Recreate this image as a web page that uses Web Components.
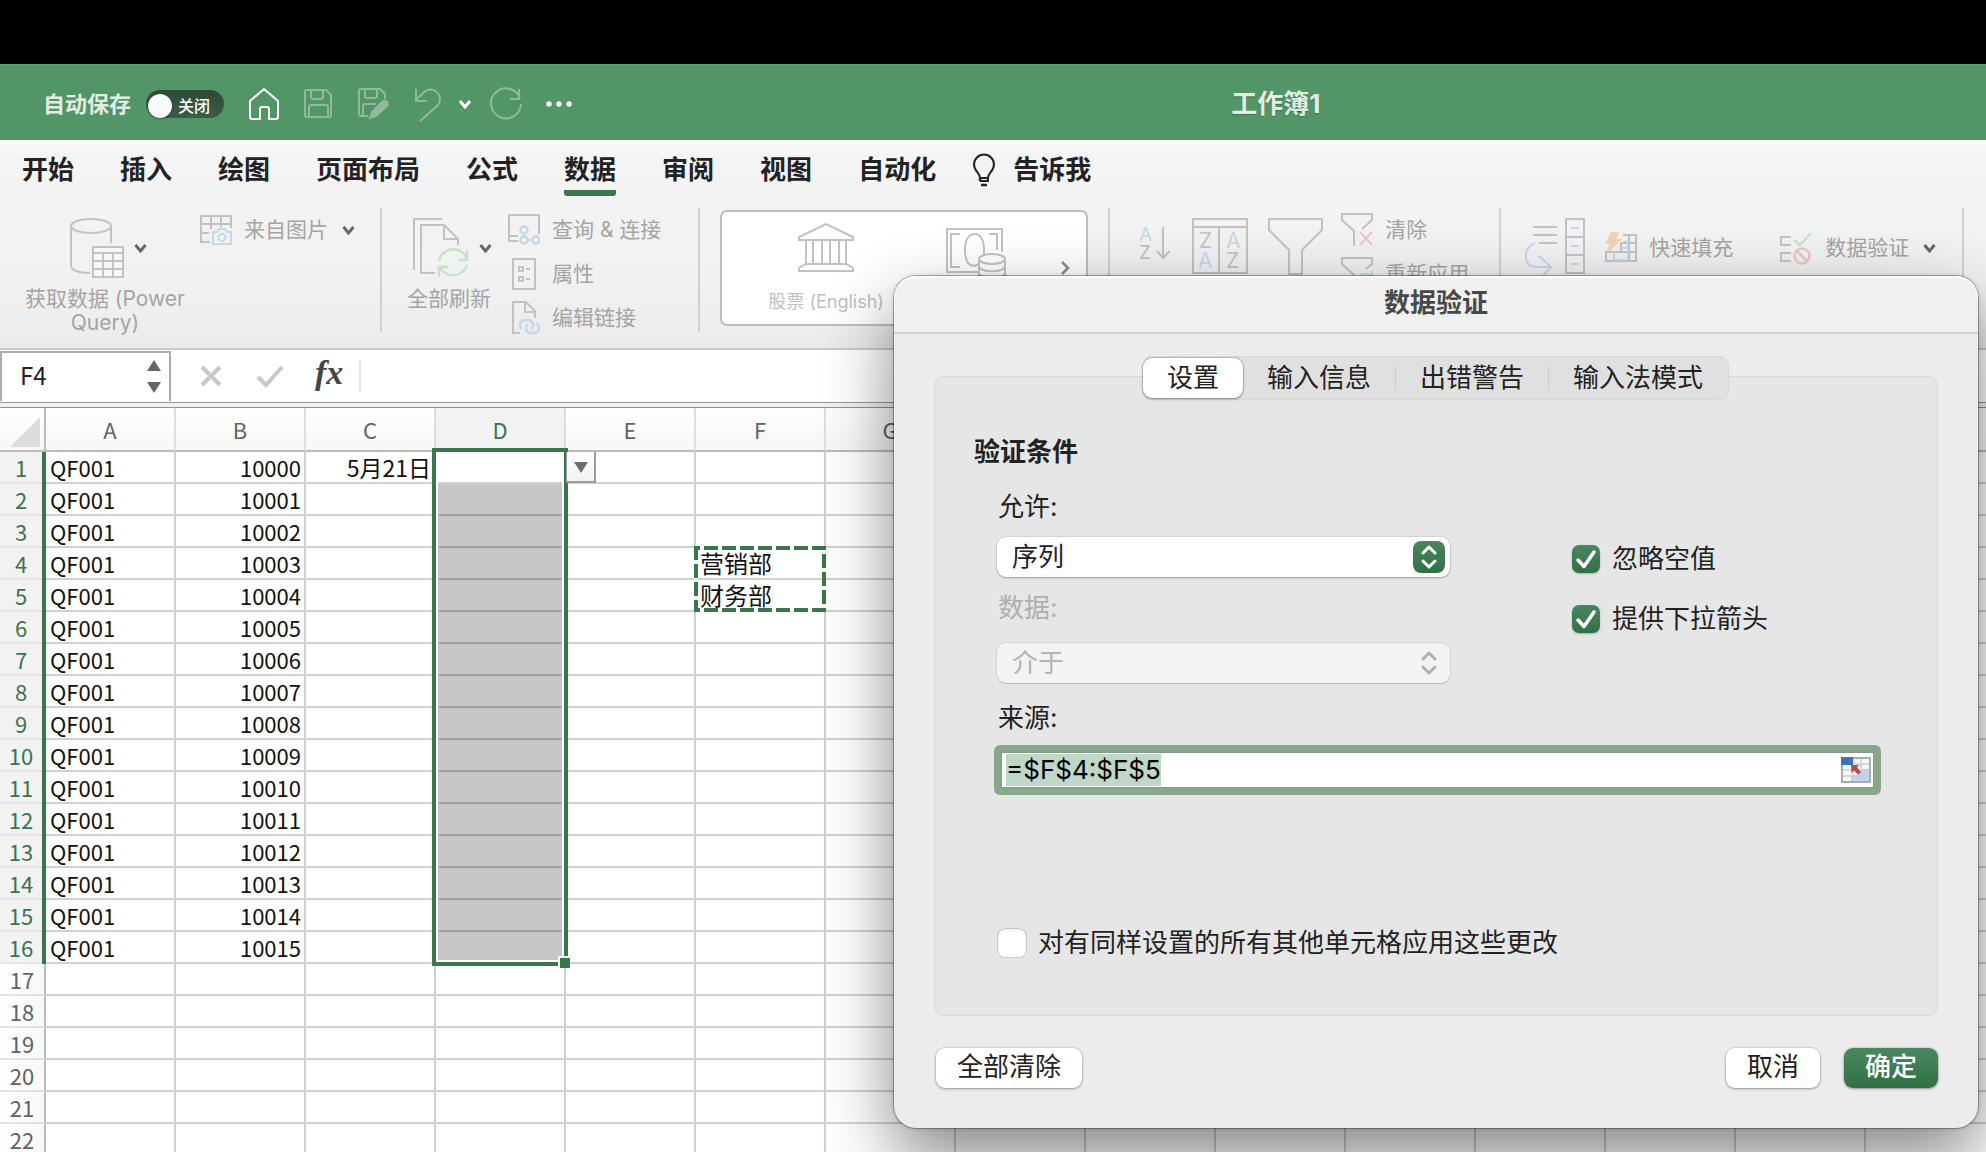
<!DOCTYPE html>
<html lang="zh-CN">
<head>
<meta charset="utf-8">
<title>工作簿1</title>
<style>
html, body { margin: 0; height: 100%; overflow: hidden; background: #fff; }
body { font-family: Inter, "Noto Sans CJK SC", sans-serif; color: #222; }
</style>
</head>
<body>
<excel-window></excel-window>
<script>
const G = '#c2c2c2', B = '#c3d8eb', GR = '#c6e2c9', R = '#efc5c3', O = '#f2d3b3';
const ICONS = {
  home: [32, 34, `<path d="M2 14 L16 2 L30 14 V30 a2 2 0 0 1-2 2 H21 V22 a2 2 0 0 0-2-2 H14 a2 2 0 0 0-2 2 V32 H4 a2 2 0 0 1-2-2 Z" stroke="#fff"/>`],
  save: [30, 30, `<g stroke="#8fbb9c"><path d="M4 1 H23 L28 6 V26 a2 2 0 0 1-2 2 H4 a2 2 0 0 1-2-2 V3 a2 2 0 0 1 2-2Z"/><path d="M8 1 V8 a2 2 0 0 0 2 2 H18 a2 2 0 0 0 2-2 V1 M6 28 V18 a2 2 0 0 1 2-2 H23 a2 2 0 0 1 2 2 V28"/></g>`],
  saveas: [32, 32, `<g stroke="#8fbb9c"><path d="M11 28 H4 a2 2 0 0 1-2-2 V3 a2 2 0 0 1 2-2 H23 L28 6 V11 M8 1 V8 a2 2 0 0 0 2 2 H18 a2 2 0 0 0 2-2 V1 M6 28 V18 a2 2 0 0 1 2-2 H19"/><path d="M13 30 L15 24 L25 14 a2.5 2.5 0 0 1 5 4 L19 28 Z" fill="#8fbb9c"/></g>`],
  undo: [30, 36, `<path d="M3 3 V15 H14 M3 14 L11 6 A9.6 9.6 0 0 1 25 19 L7 35" stroke="#8fbb9c"/>`],
  redo: [36, 36, `<path d="M32 12 A15 15 0 1 0 33 18 M31 3 V13 H22" stroke="#8fbb9c"/>`],
  chevwhite: [14, 10, `<path d="M2 2 L7 8 L12 2" stroke="#fff" stroke-width="3"/>`],
  chev: [13, 10, `<path d="M1.500 2 L6.500 8 L11.500 2" stroke="#666" stroke-width="3"/>`],
  chevright: [10, 16, `<path d="M2 2 L8 8 L2 14" stroke="#8a8a8a" stroke-width="2.500"/>`],
  dots: [28, 8, `<g fill="#fff" stroke="none"><circle cx="4" cy="4" r="2.700"/><circle cx="14" cy="4" r="2.700"/><circle cx="24" cy="4" r="2.700"/></g>`],
  bulb: [24, 34, `<g stroke="#222"><path d="M8 25 C8 20 2 18 2 11.500 A10 10 0 0 1 22 11.500 C22 18 16 20 16 25 Z M8 28 H16 V25" /><path d="M8 25 V28 M9 32 H15" stroke-width="2.500"/></g>`],
  getdata: [54, 60, `<g stroke="${G}"><ellipse cx="21" cy="8" rx="20" ry="7"/><path d="M1 8 V48 C1 52 9 55 20 55 M41 8 V25"/><rect x="23" y="29" width="30" height="30" fill="#f8f8f8"/><path d="M23 35 H53 M23 43 H53 M23 51 H53 M33 35 V59 M43 35 V59"/></g>`],
  frompic: [32, 30, `<g stroke="${G}"><path d="M10 27 H1 V1 H31 V13 M1 9 H31 M11 1 V14 M21 1 V12 M1 18 H9"/></g><g stroke="${B}"><path d="M13 17 H17 L19 14 H25 L27 17 H31 V29 H13 Z"/><circle cx="22" cy="22.500" r="3.500"/></g>`],
  refreshall: [56, 60, `<g stroke="${G}"><path d="M29 1 H1 V52 M22 55 H8 V7 H31 L45 21 V27 M31 7 V21 H45"/></g><g stroke="${GR}" stroke-width="2.500"><path d="M26 43 A14.500 14.500 0 0 1 54 41 M54 32 V42 H45 M54 47 A14.500 14.500 0 0 1 27 49 M26 59 V49 H35"/></g>`],
  query: [32, 32, `<path d="M10 27 H1 V1 H31 V20 M1 22 H10" stroke="${G}"/><g stroke="${B}" stroke-width="2.500"><circle cx="16" cy="16" r="3.500"/><circle cx="16" cy="26" r="3.500"/><circle cx="28" cy="26" r="3.500"/><path d="M16 19 V22 M20 26 H24"/></g>`],
  props: [32, 32, `<g stroke="${G}"><rect x="5" y="1" width="22" height="30"/><rect x="11" y="9" width="4" height="4"/><rect x="11" y="19" width="4" height="4"/><path d="M18 11 H22 M18 21 H22"/></g>`],
  links: [32, 34, `<path d="M12 32 H5 V1 H18 L27 10 V17 M17 1 V11 H27" stroke="${G}"/><path d="M14 28 a5 5 0 0 1 2-9 H21 a5 5 0 0 1 2 9 M20 23 a5 5 0 0 0 2 9 H27 a5 5 0 0 0 1-9.500" stroke="${B}" stroke-width="2.500"/>`],
  bank: [56, 50, `<g stroke="${G}"><path d="M1 15 L28 2 L55 15 V18 H1 Z M8 18 V42 M15 18 V42 M24 18 V42 M32 18 V42 M41 18 V42 M48 18 V42 M8 42 H48 L55 46 V49 H1 V46 Z"/></g>`],
  money: [62, 56, `<g stroke="${G}"><path d="M32 44 H1 V1 H56 V24 M14 6 H5 V39 H14 M43 6 H51 V22"/><path d="M33 36 C22 42 19 31 19 22 C19 13 22 6 29 6 C35 6 38 13 38 22 V26"/><ellipse cx="46" cy="31" rx="13" ry="5" fill="#fff"/><path d="M33 31 V52 C33 59 59 59 59 52 V31 M33 38 C33 45 59 45 59 38 M33 45 C33 52 59 52 59 45"/></g>`],
  sort: [34, 34, `<text x="1" y="15" font-size="19" fill="${B}">A</text><text x="1" y="33" font-size="19" fill="#bdbdbd">Z</text><path d="M25 1 V31 M19 25 L25 32 L32 25" stroke="${G}"/>`],
  customsort: [56, 56, `<g stroke="${G}"><rect x="1" y="1" width="54" height="54"/><path d="M1 9 H55 M27 9 V55"/></g><text x="7" y="30" font-size="21" fill="#c2c2c2">Z</text><text x="6" y="50" font-size="21" fill="${B}">A</text><text x="34" y="30" font-size="21" fill="${B}">A</text><text x="34" y="50" font-size="21" fill="#c2c2c2">Z</text>`],
  filter: [56, 58, `<path d="M1 1 H54 V12 L34 32 V56 H21 V32 L1 12 Z" stroke="${G}"/>`],
  clearfilter: [32, 34, `<path d="M13 33 V18 L1 7 V1 H31 V7 L21 16" stroke="${G}"/><path d="M19 19 L31 32 M31 19 L19 32" stroke="${R}"/>`],
  reapply: [32, 34, `<path d="M13 33 V18 L1 7 V1 H31 V7 L25 12" stroke="${G}"/><path d="M17 22 A8 8 0 0 1 31 20 M31 14 V20 H25" stroke="${GR}"/>`],
  columns: [62, 60, `<path d="M8 9 H32 M8 17 H32 M14 25 H32" stroke="${G}"/><g stroke="${G}"><rect x="41" y="1" width="18" height="54"/><path d="M41 19 H59 M41 37 H59"/></g><path d="M46 10 H54 M46 28 H54 M46 46 H54 M10 25 C-3 30 -3 49 12 49 H26 M14 38 L26 49 L16 60" stroke="${B}"/>`],
  flash: [32, 32, `<path d="M18 3 H31 V29 H1 V20 H31 M24 3 V29 M16 11 H31 M16 11 V20" stroke="${G}"/><path d="M19 28 H9 V20 M9 28 H23 V12 L20 8 M16 16 H23" stroke="${B}"/><path d="M6 1 H13 L10 8 H15 L3 19 L6 11 H2 Z" fill="${O}" stroke="${O}"/>`],
  validate: [34, 34, `<path d="M12 6 H2 V14 H12 M12 22 H2 V30 H12" stroke="${G}"/><path d="M15 9 L21 14 L32 2" stroke="${GR}" stroke-width="2.500"/><g stroke="${R}" stroke-width="2.500"><circle cx="23" cy="25" r="7.500"/><path d="M18 20 L28 30"/></g>`],
  cross: [24, 24, `<path d="M3 3 L21 21 M21 3 L3 21" stroke="#c8c8c8" stroke-width="4"/>`],
  tick: [30, 24, `<path d="M3 13 L11 21 L27 3" stroke="#c8c8c8" stroke-width="4"/>`],
  spin: [14, 36, `<path d="M0 12 L7 1 L14 12 Z M0 23 H14 L7 34 Z" fill="#666" stroke="none"/>`],
  check: [28, 28, `<path d="M6 15 L12 21.500 L22 7" stroke="#fff" stroke-width="3.500" stroke-linecap="round" stroke-linejoin="round"/>`],
  updown: [32, 32, `<path d="M10 12 L16 6 L22 12 M10 20 L16 26 L22 20" stroke="currentColor" stroke-width="3" stroke-linecap="round" stroke-linejoin="round"/>`],
  range: [30, 26, `<rect x="1" y="1" width="28" height="24" fill="#f6f6f6" stroke="#a9adb3"/><path d="M2 13 H28 M2 19 H28 M12 2 V24 M20 2 V24 M12 7 H28" stroke="#d5d9de"/><path d="M20 12 H28 V24 H10 V18 H20 Z" fill="#b7cdea" fill-opacity=".8" stroke="none"/><rect x="0" y="0" width="12" height="8" fill="#3f74bd" stroke="none"/><path d="M10 8 H18 L16 10.500 L20 15 L17.500 18 L13 13.500 L10.500 16 Z" fill="#bb4a47" stroke="none"/>`],
  drop: [14, 12, `<path d="M0 1 H14 L7 12 Z" fill="#6d6d6d" stroke="none"/>`]
};

const define = (name, html, setup) => customElements.define(name, class extends HTMLElement {
  constructor() {
    super();
    this.attachShadow({ mode: 'open' });
  }
  connectedCallback() {
    if (this.ready) return;
    this.ready = true;
    this.shadowRoot.innerHTML = typeof html === 'function' ? html(this) : html;
    if (setup) setup(this.shadowRoot, this);
  }
});

const RESET = `<style>
:host,*{box-sizing:border-box}
button,input,select{font:inherit;color:inherit;margin:0;padding:0;border:0;background:none;outline:0;appearance:none;text-align:inherit}
</style>`;

define('x-icon', el => {
  const [w, h, body] = ICONS[el.getAttribute('name')];
  return `<style>:host{display:block;flex:none;width:${w}px;height:${h}px}svg{display:block}</style>
  <svg width="${w}" height="${h}" viewBox="0 0 ${w} ${h}" fill="none" stroke-width="2" font-family="Inter, sans-serif" aria-hidden="true">${body}</svg>`;
});

define('title-bar', `${RESET}<style>
:host{display:grid;grid-template-columns:62% auto;align-items:center;height:76px;background:#529567;color:#e1ede4;border-top:1px solid #5d9d71;padding-top:3px}
.tools{display:flex;align-items:center;padding-left:43px}
label{display:flex;align-items:center;gap:15px;font-size:22px;font-weight:600;line-height:32px;margin-right:24px}
.switch{display:grid;align-items:center;width:78px;height:28px;border-radius:14px;background:linear-gradient(#2c4a37,#3c5c48);color:#fff;font-size:16px;font-weight:500}
.switch>*{grid-area:1/1}
.switch input{width:24px;height:24px;border-radius:12px;background:#fafafa;margin-left:2px;box-shadow:0 1px 2px #0006}
.switch span{padding-left:32px}
button{display:block}
.b1{margin-right:23px}.b2{margin-right:24px}.b3{margin-right:15px}.b4{margin-right:16px}.b5{margin-right:21px}
h1{margin:0;font-size:26px;line-height:36px;font-weight:700;text-shadow:0 1px 1px #0004}
</style>
<div class="tools">
<label>自动保存<span class="switch"><input type="checkbox" role="switch"><span>关闭</span></span></label>
<button class="b1" aria-label="主页"><x-icon name="home"></x-icon></button>
<button class="b2" aria-label="保存"><x-icon name="save"></x-icon></button>
<button class="b2" aria-label="另存为"><x-icon name="saveas"></x-icon></button>
<button class="b3" aria-label="撤消"><x-icon name="undo"></x-icon></button>
<button class="b4" aria-label="撤消列表"><x-icon name="chevwhite"></x-icon></button>
<button class="b5" aria-label="恢复"><x-icon name="redo"></x-icon></button>
<button aria-label="更多"><x-icon name="dots"></x-icon></button>
</div>
<h1>工作簿1</h1>`);

define('ribbon-tabs', `${RESET}<style>
:host{display:flex;align-items:flex-start;height:64px;padding:10px 22px 0;gap:46px;font-size:26px;line-height:40px;font-weight:600}
button{display:block;padding-bottom:6px;white-space:nowrap}
button[aria-selected=true]{background:linear-gradient(#3a754b,#3a754b) bottom/100% 6px no-repeat;border-radius:3px}
.tell{display:flex;align-items:center;gap:17px;margin-left:-10px}
</style>
<button role="tab">开始</button><button role="tab">插入</button><button role="tab">绘图</button><button role="tab">页面布局</button><button role="tab">公式</button><button role="tab" aria-selected="true">数据</button><button role="tab">审阅</button><button role="tab">视图</button><button role="tab">自动化</button>
<button class="tell"><x-icon name="bulb"></x-icon>告诉我</button>`);

define('ribbon-big', `${RESET}<style>
:host{display:block;flex:none}
button{display:flex;flex-direction:column;align-items:center;padding-top:10px;gap:9px;font-size:21px;line-height:24px;text-align:center;width:100%}
.row{display:flex;align-items:center;gap:10px;padding-left:7px}
</style>
<button><span class="row"><slot name="icon"></slot><x-icon name="chev"></x-icon></span><span><slot></slot></span></button>`);

define('ribbon-small', el => `${RESET}<style>
:host{display:block;flex:none}
button{display:flex;align-items:center;gap:12px;height:44px;font-size:21px;line-height:30px;white-space:nowrap}
x-icon[name=chev]{margin-left:2px}
</style>
<button><x-icon name="${el.getAttribute('icon')}"></x-icon><slot></slot>${el.hasAttribute('menu') ? '<x-icon name="chev"></x-icon>' : ''}</button>`);

define('ribbon-bar', `${RESET}<style>
:host{display:flex;align-items:flex-start;padding:4px 0 8px;height:144px;color:#a4a4a4}
hr{flex:none;width:2px;height:124px;margin:0;border:0;background:#d0d0d0}
.g{display:flex;flex:none}
.gallery{display:flex;align-items:flex-start;width:368px;height:116px;margin:2px 20px 0;border:2px solid #bdbdbd;border-radius:7px;background:#fff;color:#bfbfbf;font-size:18px;line-height:24px}
.gallery button{display:flex;flex-direction:column;align-items:center;gap:18px;padding-top:10px;flex:none}
.gallery .stocks{padding-left:46px}
.gallery .money{margin-left:62px;padding-top:16px}
.gallery .more{margin-left:52px;align-self:center;padding:0}
.icons{display:flex;align-items:flex-start;padding:10px 20px 0 28px;gap:20px}
.icons button:first-child{padding-top:8px}
.mid{display:flex;padding-top:18px}
</style>
<div class="g" style="padding:0 25px 0 24px;gap:14px">
<ribbon-big style="width:162px"><x-icon slot="icon" name="getdata"></x-icon>获取数据 (Power Query)</ribbon-big>
<ribbon-small icon="frompic" menu>来自图片</ribbon-small></div><hr>
<div class="g" style="padding:0 37px 0 22px;gap:14px">
<ribbon-big style="width:90px"><x-icon slot="icon" name="refreshall"></x-icon>全部刷新</ribbon-big>
<div><ribbon-small icon="query">查询 &amp; 连接</ribbon-small><ribbon-small icon="props">属性</ribbon-small><ribbon-small icon="links">编辑链接</ribbon-small></div></div><hr>
<div class="gallery"><button class="stocks"><x-icon name="bank"></x-icon>股票 (English)</button><button class="money" aria-label="货币"><x-icon name="money"></x-icon></button><button class="more" aria-label="更多"><x-icon name="chevright"></x-icon></button></div><hr>
<div class="icons"><button aria-label="升序"><x-icon name="sort"></x-icon></button><button aria-label="排序"><x-icon name="customsort"></x-icon></button><button aria-label="筛选"><x-icon name="filter"></x-icon></button></div>
<div class="g" style="padding-right:30px;margin-left:-3px"><div><ribbon-small icon="clearfilter">清除</ribbon-small><ribbon-small icon="reapply">重新应用</ribbon-small></div></div><hr>
<div class="icons" style="padding-left:24px;padding-right:18px"><x-icon name="columns"></x-icon></div>
<div class="mid" style="gap:46px"><ribbon-small icon="flash">快速填充</ribbon-small><ribbon-small icon="validate" menu>数据验证</ribbon-small></div>
<hr style="margin-left:26px">`);

define('formula-bar', `${RESET}<style>
:host{display:flex;align-items:center;height:60px;border-top:2px solid #cacaca;border-bottom:1px solid #8f8f8f;padding-bottom:6px;background:linear-gradient(#fff 52px,#999 52px,#999 53px,#f2f2f2 53px)}
.name{display:flex;align-items:center;width:171px;height:50px;flex:none;border:2px solid #ababab;border-bottom:0;padding:0 8px 0 18px}
.name input{flex:1;min-width:0;height:34px;margin-bottom:3px;font:24px/34px "Noto Sans CJK SC",sans-serif;color:#222}
.acts{display:flex;align-items:center;gap:32px;padding-left:28px}
em{font:italic 700 34px/26px "Liberation Serif",serif;color:#444;padding-right:16px;border-right:2px solid #e3e3e3;height:32px;margin-left:-2px}
.value{flex:1;height:48px;margin-left:12px}
</style>
<label class="name"><input aria-label="名称框" value="F4"><x-icon name="spin"></x-icon></label>
<div class="acts"><button aria-label="取消输入"><x-icon name="cross"></x-icon></button><button aria-label="确认输入"><x-icon name="tick"></x-icon></button><em>fx</em></div>
<input class="value" aria-label="编辑栏">`);

const cols = [...'ABCDEFGHIJKLMNO'];
const rows = Array.from({ length: 23 }, (_, i) => i + 1);
const cell = (r, c) => {
  if (c === 'A' && r <= 16) return 'QF001';
  if (c === 'B' && r <= 16) return String(9999 + r);
  if (c === 'C' && r === 1) return '5月21日';
  if (c === 'F' && r === 4) return '营销部';
  if (c === 'F' && r === 5) return '财务部';
  return '';
};
const kind = (r, c) => ({ B: 'num', C: 'num date', F: 'list', D: r > 1 && r <= 16 ? 'fill' : '' })[c] || '';
define('sheet-grid', `${RESET}<style>
:host{display:block;position:relative;flex:1;min-height:0;overflow:hidden;font:22px/30px "Noto Sans CJK SC",sans-serif;color:#111}
table{border-collapse:separate;border-spacing:0;table-layout:fixed;width:1996px}
th,td{padding:0 3px 0 4px;height:32px;white-space:nowrap;border:solid #d0d0d0;border-width:0 2px 2px 0;line-height:30px}
th{font-weight:400;color:#636363;padding:0}
thead th{height:44px;border-color:transparent #c0c0c0 #bbb transparent;border-right-color:#dedede;background:linear-gradient(#fefefe,#f7f7f7)}
thead th:first-child{border-right-color:#bbb}
thead .sel,tbody th.sel{background:#f2f2f2;color:#3a754b}
tbody th{border-right-color:#bbb;border-bottom-color:#e2e2e2;background:linear-gradient(90deg,#fff,#f8f8f8)}
tbody th.sel{border-right:4px solid #3a754b;border-bottom-color:#e6e6e6}
td.num{text-align:right}
td.date{font-size:23px}
td.list{font-size:24px}
td.fill{background:#c6c6c6;border-bottom-color:#a2a2a2}
.corner svg{display:block;margin-left:10px;margin-top:5px}
.bar{position:absolute;left:42px;top:44px;width:4px;height:512px;background:#3a754b}
.selbox{position:absolute;left:432px;top:40px;width:136px;height:518px;border:4px solid #3a754b;box-shadow:inset 0 0 0 2px #fff;pointer-events:none}
.handle{position:absolute;left:558px;top:548px;width:12px;height:12px;background:#3a754b;border:solid #fff;border-width:2px 0 0 2px}
.drop{position:absolute;left:566px;top:44px;width:30px;height:31px;display:flex;align-items:center;justify-content:center;background:linear-gradient(#fff,#f1f1f1);border:solid #9c9c9c;border-width:0 2px 2px 1px}
.ants{position:absolute;left:694px;top:138px}
</style>
<table><colgroup><col style="width:46px">${cols.map(() => '<col style="width:130px">').join('')}</colgroup>
<thead><tr><th class="corner"><svg width="30" height="30"><path d="M30 0V30H0Z" fill="#dcdcdc"/></svg></th>${cols.map(c => `<th scope="col" class="${c === 'D' ? 'sel' : ''}">${c}</th>`).join('')}</tr></thead>
<tbody>${rows.map(r => `<tr><th scope="row" class="${r <= 16 ? 'sel' : ''}">${r}</th>${cols.map(c => `<td class="${kind(r, c)}">${cell(r, c)}</td>`).join('')}</tr>`).join('')}</tbody></table>
<div class="bar"></div><div class="selbox"></div><div class="handle"></div>
<button class="drop" aria-label="下拉列表"><x-icon name="drop"></x-icon></button>
<svg class="ants" width="132" height="66" fill="none" stroke-width="4"><rect x="2" y="2" width="128" height="62" stroke="#fff"/><rect x="2" y="2" width="128" height="62" stroke="#3a754b" stroke-dasharray="14 4" stroke-dashoffset="10"/></svg>`);

define('mac-checkbox', el => `${RESET}<style>
:host{display:block}
label{display:flex;align-items:center;gap:12px;font-size:26px;line-height:36px}
.box{display:grid;flex:none}
.box>*{grid-area:1/1}
input{width:28px;height:28px;border-radius:7px;background:#fff;box-shadow:0 0 0 1px #0002,inset 0 2px 3px #0001}
input:checked{background:linear-gradient(#4a8760,#317044);box-shadow:0 1px 2px #3a754b66}
x-icon{pointer-events:none}
input:not(:checked)+x-icon{visibility:hidden}
</style>
<label><span class="box"><input type="checkbox" ${el.hasAttribute('checked') ? 'checked' : ''}><x-icon name="check"></x-icon></span><slot></slot></label>`);

define('mac-popup', el => `${RESET}<style>
:host{display:block}
label{display:block;font-size:26px;line-height:34px}
.box{display:grid;align-items:center;margin-left:-1px;margin-top:${el.hasAttribute('disabled') ? 18 : 13}px;height:40px;border-radius:9px;background:#fff;box-shadow:0 0 0 1px #0001,0 1px 2px #0004}
.box>*{grid-area:1/1}
select{width:100%;height:40px;padding:0 48px 2px 15px;font-size:26px;opacity:1}
x-icon{justify-self:end;margin-right:5px;border-radius:8px;color:#fff;background:linear-gradient(#4a8760,#317044);pointer-events:none}
:host([disabled]) label{color:#aeaeae}
:host([disabled]) .box{background:#f3f3f3;color:#b4b4b4;box-shadow:0 0 0 1px #0001,0 1px 1px #0002}
:host([disabled]) x-icon{background:none;color:#b0b0b0}
</style>
<label for="s">${el.getAttribute('label')}</label>
<div class="box"><select id="s" ${el.hasAttribute('disabled') ? 'disabled' : ''}><option>${el.getAttribute('value')}</option></select><x-icon name="updown"></x-icon></div>`);

define('mac-button', `${RESET}<style>
:host{display:block}
button{display:block;height:40px;padding:0 21px 2px;border-radius:9px;font-size:26px;line-height:38px;background:#fff;box-shadow:0 0 0 1px #0001,0 1px 3px #0005;white-space:nowrap}
:host([primary]) button{color:#fff;font-weight:500;background:linear-gradient(#4a8760,#317044)}
</style><button><slot></slot></button>`);

define('validation-dialog', `${RESET}<style>
:host{display:block;border-radius:22px;background:#ececec;box-shadow:0 0 0 1px #0004,0 0 4px #0003,0 30px 70px #0000007a;font-size:26px;color:#222}
header{height:58px;border-bottom:2px solid #cfcfcf;border-radius:22px 22px 0 0;background:#f0f0f0;box-shadow:inset 0 2px 0 #fff}
h2{margin:0;font-size:26px;line-height:54px;font-weight:700;text-align:center;color:#484848}
main{padding:22px 40px 40px}
.seg{position:relative;display:flex;align-items:center;width:max-content;height:44px;margin:0 auto -24px;padding-right:2px;border-radius:10px;background:#e0e0e0;box-shadow:inset 0 0 0 1px #d8d8d8}
.seg button{height:40px;padding:0 24px 1px;border-radius:9px;line-height:39px}
.seg button[aria-selected=true]{background:#fff;box-shadow:0 0 0 1px #0002,0 1px 3px #0005}
.seg i{width:1px;height:24px;background:#cacaca}
.panel{padding:59px 39px 54px;border:1px solid #dadada;border-radius:10px;background:#e6e6e6}
h3{margin:0 0 22px;font-size:26px;line-height:32px;font-weight:700}
.fields{padding-left:24px}
.two{display:flex;gap:122px}
.left{width:452px}
.left mac-popup+mac-popup{margin-top:14px}
.right{padding-top:51px;display:flex;flex-direction:column;gap:24px}
.src{display:block;margin-top:18px;line-height:34px}
.input{display:flex;align-items:center;height:50px;margin:10px 17px 0 -4px;padding:0 3px 0 5px;border:7px solid #89a58c;border-radius:6px;background:#fff;box-shadow:inset 0 0 0 1px #7f9d85}
.input input{flex:1;min-width:0;height:32px;font-size:26px;line-height:32px;color:#000}
::selection{background:#bfd7c7;color:#000}
.all{margin-top:130px}
footer{display:flex;justify-content:flex-end;gap:24px;margin-top:32px}
footer :first-child{margin-right:auto;margin-left:2px}
</style>
<header><h2>数据验证</h2></header>
<main>
<div class="seg" role="tablist"><button role="tab" aria-selected="true">设置</button><button role="tab">输入信息</button><i></i><button role="tab">出错警告</button><i></i><button role="tab">输入法模式</button></div>
<section class="panel"><h3>验证条件</h3>
<div class="fields"><div class="two"><div class="left"><mac-popup label="允许:" value="序列"></mac-popup><mac-popup label="数据:" value="介于" disabled></mac-popup></div>
<div class="right"><mac-checkbox checked>忽略空值</mac-checkbox><mac-checkbox checked>提供下拉箭头</mac-checkbox></div></div>
<label class="src" for="src">来源:</label>
<div class="input"><input id="src" value="=$F$4:$F$5"><button aria-label="选择区域"><x-icon name="range"></x-icon></button></div>
<mac-checkbox class="all">对有同样设置的所有其他单元格应用这些更改</mac-checkbox></div></section>
<footer><mac-button>全部清除</mac-button><mac-button>取消</mac-button><mac-button primary>确定</mac-button></footer>
</main>`, root => { const i = root.getElementById('src'); i.focus(); i.select(); });

define('excel-window', `<style>
:host{display:flex;flex-direction:column;position:relative;height:100vh;overflow:hidden;padding-top:64px;box-sizing:border-box;background:linear-gradient(#000 64px,#fff 64px)}
.ribbon{background:linear-gradient(#fafafa,#f4f4f4 16px,#f1f1f1 70%,#ebebeb);flex:none}
title-bar,formula-bar{flex:none}
validation-dialog{position:absolute;right:8px;top:276px;width:1084px}
</style>
<title-bar></title-bar>
<div class="ribbon"><ribbon-tabs></ribbon-tabs><ribbon-bar></ribbon-bar></div>
<formula-bar></formula-bar>
<sheet-grid></sheet-grid>
<validation-dialog></validation-dialog>`);
</script>
</body>
</html>
